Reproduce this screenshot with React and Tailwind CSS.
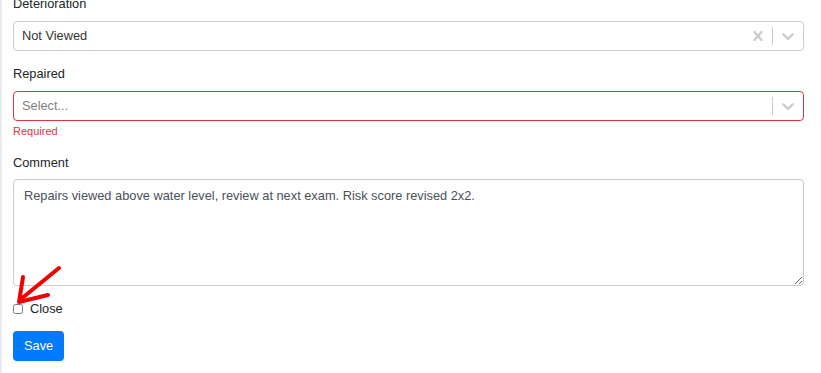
function Chevron() {
  return (
    <svg width="20" height="20" viewBox="0 0 20 20" fill="#cccccc">
      <path d="M4.516 7.548c0.436-0.446 1.043-0.481 1.576 0l3.908 3.747 3.908-3.747c0.533-0.481 1.141-0.446 1.574 0 0.436 0.445 0.408 1.197 0 1.615-0.406 0.418-4.695 4.502-4.695 4.502-0.217 0.223-0.502 0.335-0.787 0.335s-0.57-0.112-0.789-0.335c0 0-4.287-4.084-4.695-4.502s-0.436-1.170 0-1.615z" />
    </svg>
  );
}

function Cross() {
  return (
    <svg width="20" height="20" viewBox="0 0 20 20" fill="#cccccc">
      <path d="M14.348 14.849c-0.469 0.469-1.229 0.469-1.697 0l-2.651-3.030-2.651 3.029c-0.469 0.469-1.229 0.469-1.697 0-0.469-0.469-0.469-1.229 0-1.697l2.758-3.15-2.759-3.152c-0.469-0.469-0.469-1.228 0-1.697s1.228-0.469 1.697 0l2.652 3.031 2.651-3.031c0.469-0.469 1.228-0.469 1.697 0s0.469 1.229 0 1.697l-2.758 3.152 2.758 3.15c0.469 0.469 0.469 1.229 0 1.698z" />
    </svg>
  );
}

function SelectBox({ value, placeholder, clearable, invalid }) {
  return (
    <div
      className={`flex items-center h-[30px] rounded bg-white border ${
        invalid ? 'border-[#dc3545]' : 'border-[#cccccc]'
      }`}
    >
      <div className="flex-1 px-2 text-[12.8px]">
        {value ? (
          <span className="text-[#333333]">{value}</span>
        ) : (
          <span className="text-[#808080]">{placeholder}</span>
        )}
      </div>
      <div className="flex items-center h-full">
        {clearable && (
          <div className="px-[4px] flex items-center">
            <Cross />
          </div>
        )}
        <span className="w-px h-[18px] bg-[#cccccc]" />
        <div className="px-[5px] flex items-center">
          <Chevron />
        </div>
      </div>
    </div>
  );
}

export default function App() {
  return (
    <div
      className="relative w-[821px] h-[373px] overflow-hidden bg-white border-l-2 border-[#e9ecef]"
      style={{ fontFamily: '"Liberation Sans", Arial, sans-serif' }}
    >
      <div className="pl-[11px] pr-[17px] -mt-[6px] text-[#212529] text-[12.8px] leading-[20px]">
        <div className="mb-[13px]">
          <label className="block mb-[7px]">Deterioration</label>
          <SelectBox value="Not Viewed" clearable />
        </div>

        <div className="mb-[13px]">
          <label className="block mb-[7px]">Repaired</label>
          <SelectBox placeholder="Select..." invalid />
          <div className="mt-[2px] text-[11px] leading-[16px] text-[#dc3545]">Required</div>
        </div>

        <div className="mt-[14px] mb-[13px]">
          <label className="block mb-[6px]">Comment</label>
          <textarea
            className="block w-full h-[107px] rounded border border-[#cccccc] px-[10px] py-[6px] text-[12.8px] leading-[20px] text-[#495057] outline-none"
            defaultValue="Repairs viewed above water level, review at next exam. Risk score revised 2x2."
          />
        </div>

        <label className="flex items-center gap-[7px]">
          <input type="checkbox" className="w-[10px] h-[10px] m-0" />
          <span>Close</span>
        </label>

        <button className="mt-[12px] h-[30px] px-[11px] rounded bg-[#007bff] text-white text-[12.8px]">
          Save
        </button>
      </div>

      <svg className="absolute left-0 top-0 pointer-events-none" width="821" height="373">
        <g stroke="#f00000" strokeWidth="4" fill="none" strokeLinecap="round" strokeLinejoin="round">
          <line x1="57" y1="268" x2="19" y2="299" />
          <polyline points="21,277 17,302 46,295" />
        </g>
      </svg>
    </div>
  );
}
